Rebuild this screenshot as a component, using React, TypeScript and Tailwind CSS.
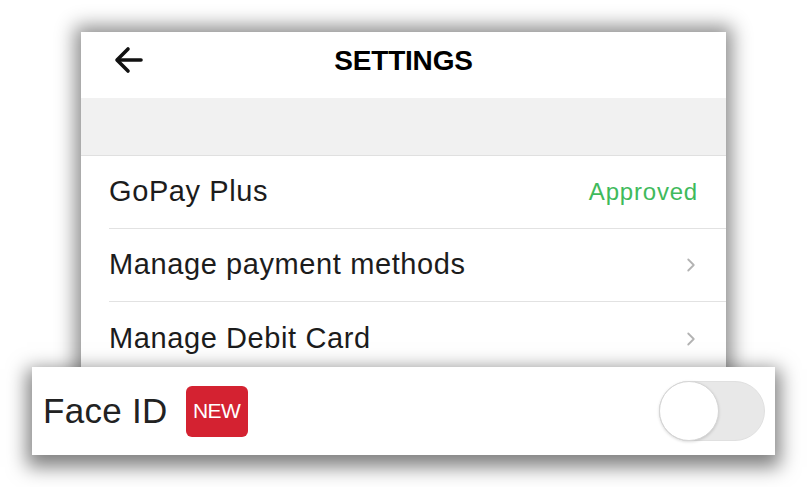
import { ChevronRight } from "lucide-react"

const font = { fontFamily: '"Liberation Sans", Arial, sans-serif' }

const Row = ({ label, right, last }: { label: string; right?: React.ReactNode; last?: boolean }) => (
	<div className="flex items-center pl-[28px]">
		<div className={`flex-1 flex items-center justify-between h-[73px] pr-[28px] ${last ? '' : 'border-b border-[#e2e2e2]'}`}>
			<span className="text-[29px] tracking-[0.6px] text-[#1c1c1c]">{label}</span>
			{right}
		</div>
	</div>
)

export default function App() {
	return (
		<div className="relative w-[807px] h-[487px] bg-white overflow-hidden" style={font}>
			<div className="ml-[81px] mt-[32px] w-[645px] h-[345px] bg-white shadow-[0_0_18px_6px_rgba(0,0,0,0.45)]">
				{/* header */}
				<div className="relative h-[66px] flex items-center justify-center pb-[8px]">
					<svg className="absolute left-[33px] top-[14px]" width="30" height="30" viewBox="0 0 30 30" fill="none" stroke="#111" strokeWidth="3.6" strokeLinecap="round" strokeLinejoin="round">
						<path d="M27 14H4" />
						<path d="M14 3L3 14l11 11" />
					</svg>
					<span className="text-[28px] font-bold text-black tracking-[-0.2px]">SETTINGS</span>
				</div>
				<div className="h-[58px] bg-[#f1f1f1] border-b border-[#e0e0e0]" />
				<Row label="GoPay Plus" right={<span className="text-[24px] text-[#3fba5c] tracking-[0.8px]">Approved</span>} />
				<Row label="Manage payment methods" right={<ChevronRight size={22} strokeWidth={2} color="#b3b3b3" className="-mr-[4px]" />} />
				<Row label="Manage Debit Card" right={<ChevronRight size={22} strokeWidth={2} color="#b3b3b3" className="-mr-[4px]" />} last />
			</div>

			{/* Face ID overlay */}
			<div className="absolute left-[32px] top-[367px] w-[743px] h-[88px] bg-white flex items-center justify-between pl-[11px] pr-[10px] shadow-[0_7px_18px_5px_rgba(0,0,0,0.5)]">
				<div className="flex items-center gap-[18px]">
					<span className="text-[35px] tracking-[0.3px] text-[#222]">Face ID</span>
					<span className="w-[62px] h-[51px] rounded-[6px] bg-[#d42231] text-white text-[21px] flex items-center justify-center tracking-[-0.5px]">NEW</span>
				</div>
				<div className="relative w-[106px] h-[60px] rounded-full bg-[#e8e8e8] border border-[#e0e0e0]">
					<div className="absolute -left-[1px] -top-[1px] w-[60px] h-[60px] rounded-full bg-white border border-[#d6d6d6] shadow-[0_1px_3px_rgba(0,0,0,0.15)]" />
				</div>
			</div>
		</div>
	)
}
